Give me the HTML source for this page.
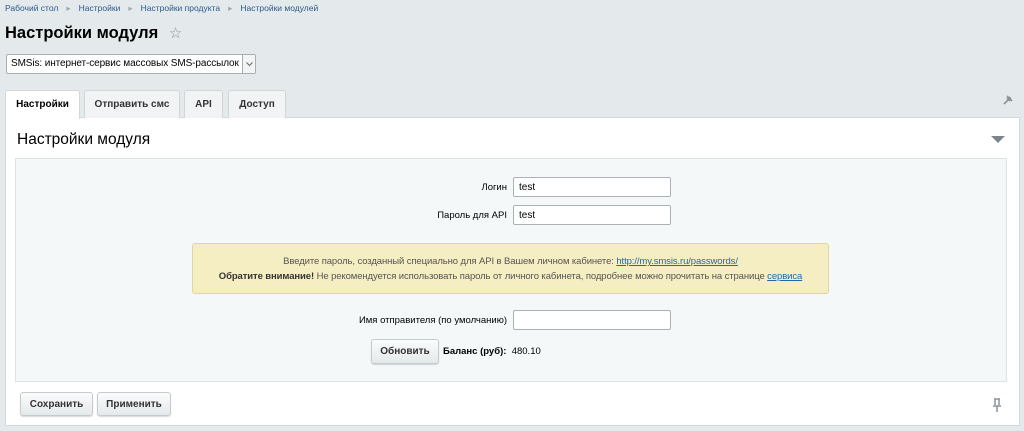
<!DOCTYPE html><html><head><meta charset="utf-8"><style>
*{box-sizing:border-box;margin:0;padding:0}
body{width:1024px;height:431px;background:#e4eaec;font-family:"Liberation Sans",Arial,sans-serif;position:relative;overflow:hidden;font-size:11px;color:#000}
.a{position:absolute;white-space:nowrap}
.bc{top:3px;left:5px;font-size:8.5px;color:#2d5a8b}
.bc span.s{color:#9aa;margin:0 8px}
h1{position:absolute;left:5px;top:24px;font-size:16.5px;font-weight:bold;color:#000;white-space:nowrap}
.sel{left:6px;top:54px;width:250px;height:20px;background:#fff;border:1px solid #a4aeb3;border-radius:2px;font-size:10px;padding:3px 0 0 4px;letter-spacing:-0.1px}
.sel .ar{position:absolute;right:0;top:0;width:13px;height:18px;border-left:1px solid #a4aeb3;background:#f3f5f5}
.tab{top:90px;height:28px;border:1px solid #d0d6d8;border-bottom:none;background:#f1f3f4;border-radius:3px 3px 0 0;font-size:10px;font-weight:bold;color:#333;text-align:center;padding-top:8px}
.panel{left:5px;top:117px;width:1015px;height:309px;background:#fff;border:1px solid #d3d9db}
.inner{left:15px;top:158px;width:992px;height:224px;background:#f5f8f9;border:1px solid #dde3e5}
.lbl{font-size:9.5px;text-align:right;width:200px;color:#000}
.inp{width:158px;height:20px;background:#fff;border:1px solid #a9b3b7;border-radius:2px;font-size:10px;padding:4px 5px}
.note{left:192px;top:243px;width:637px;height:51px;background:#f6eec3;border:1px solid #e2d69c;border-radius:3px;text-align:center;font-size:9.5px;color:#555;line-height:15px;padding-top:10px;letter-spacing:-0.1px}
.note a{color:#2067b0;text-decoration:underline}
.btn{height:24px;border:1px solid #c5ccce;border-radius:3px;background:linear-gradient(#fbfcfc,#e4e9eb);font-size:10px;font-weight:bold;color:#333;text-align:center;padding-top:6px;box-shadow:0 1px 1px rgba(0,0,0,.15)}
</style></head><body>
<div class="a bc">Рабочий стол<span class="s">▸</span>Настройки<span class="s">▸</span>Настройки продукта<span class="s">▸</span>Настройки модулей</div>
<h1>Настройки модуля <span style="color:#8a9498;font-weight:normal;font-size:15px;margin-left:6px">☆</span></h1>
<div class="a sel">SMSis: интернет-сервис массовых SMS-рассылок<div class="ar"><svg width="13" height="18"><path d="M3.5 7.5 6.5 10.5 9.5 7.5" fill="none" stroke="#666" stroke-width="1"/></svg></div></div>
<div class="a panel"></div>
<div class="a tab" style="left:5px;width:75px;background:#fff;border-color:#d3d9db;height:29px;color:#000">Настройки</div>
<div class="a tab" style="left:84px;width:96px;">Отправить смс</div>
<div class="a tab" style="left:184px;width:39px;">API</div>
<div class="a tab" style="left:228px;width:58px;">Доступ</div>
<svg class="a" style="left:1001px;top:93px" width="14" height="14"><path d="M3 11 7 7M6 3 11 8M8 4 10 6 M6 5 9 8" stroke="#8a9498" stroke-width="1.6" fill="none"/></svg>
<div class="a" style="left:17px;top:131px;font-size:15.5px;color:#000">Настройки модуля</div>
<svg class="a" style="left:991px;top:136px" width="14" height="8"><path d="M0 0H14L7 7Z" fill="#7d878b"/></svg>
<div class="a inner"></div>
<div class="a lbl" style="left:307px;top:182px">Логин</div>
<div class="a inp" style="left:513px;top:177px">test</div>
<div class="a lbl" style="left:307px;top:210px">Пароль для API</div>
<div class="a inp" style="left:513px;top:205px">test</div>
<div class="a note">Введите пароль, созданный специально для API в Вашем личном кабинете: <a>http://my.smsis.ru/passwords/</a><br><b style="color:#333">Обратите внимание!</b> Не рекомендуется использовать пароль от личного кабинета, подробнее можно прочитать на странице <a>сервиса</a></div>
<div class="a lbl" style="left:307px;top:315px">Имя отправителя (по умолчанию)</div>
<div class="a inp" style="left:513px;top:310px"></div>
<div class="a btn" style="left:371px;top:339px;width:68px;height:25px">Обновить</div>
<div class="a" style="left:443px;top:346px;font-size:9.5px"><b>Баланс (руб):</b>&nbsp; 480.10</div>
<div class="a btn" style="left:20px;top:392px;width:73px">Сохранить</div>
<div class="a btn" style="left:97px;top:392px;width:74px">Применить</div>
<svg class="a" style="left:992px;top:398px" width="10" height="14"><path d="M2 1H8M3 1V7M7 1V7M1 8H9M5 8V14" stroke="#8a9498" stroke-width="1.5" fill="none"/></svg>
</body></html>
